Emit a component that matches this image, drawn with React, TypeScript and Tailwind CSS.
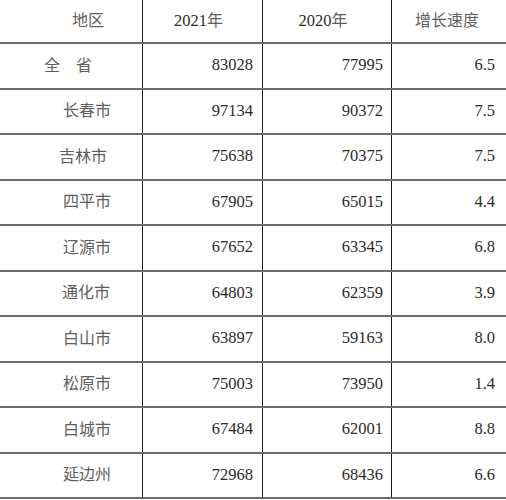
const rows = [
  { name: "全\u3000省", pad: "pr-[50px]", y21: "83028", y20: "77995", rate: "6.5" },
  { name: "长春市", pad: "pr-[31px]", y21: "97134", y20: "90372", rate: "7.5" },
  { name: "吉林市", pad: "pr-[35px]", y21: "75638", y20: "70375", rate: "7.5" },
  { name: "四平市", pad: "pr-[31px]", y21: "67905", y20: "65015", rate: "4.4" },
  { name: "辽源市", pad: "pr-[31px]", y21: "67652", y20: "63345", rate: "6.8" },
  { name: "通化市", pad: "pr-[32px]", y21: "64803", y20: "62359", rate: "3.9" },
  { name: "白山市", pad: "pr-[31px]", y21: "63897", y20: "59163", rate: "8.0" },
  { name: "松原市", pad: "pr-[31px]", y21: "75003", y20: "73950", rate: "1.4" },
  { name: "白城市", pad: "pr-[31px]", y21: "67484", y20: "62001", rate: "8.8" },
  { name: "延边州", pad: "pr-[31px]", y21: "72968", y20: "68436", rate: "6.6" },
];

export default function App() {
  return (
    <div className="w-[506px] h-[500px] bg-white text-[#2b2b2b] text-[16.5px] font-['Liberation_Serif','Noto_Sans_CJK_SC',serif]">
      {/* header */}
      <div className="grid grid-cols-[143px_120px_129px_1fr] h-[44px] border-b-2 border-[#6b6b6b]">
        <div className="flex items-center pl-[72px] border-r border-[#1a1a1a] text-[#5e5e5e] text-[16px]">地区</div>
        <div className="flex items-center justify-center pr-[8px] border-r border-[#1a1a1a]">
          2021<span className="text-[#5e5e5e] text-[16px]">年</span>
        </div>
        <div className="flex items-center justify-center pr-[8px] border-r border-[#1a1a1a]">
          2020<span className="text-[#5e5e5e] text-[16px]">年</span>
        </div>
        <div className="flex items-center pl-[23px] text-[#5e5e5e] text-[16px]">增长速度</div>
      </div>

      {/* rows */}
      {rows.map((r) => (
        <div
          key={r.name}
          className="grid grid-cols-[143px_120px_129px_1fr] h-[45.5px] border-b-2 border-[#6b6b6b]"
        >
          <div className={`flex items-center justify-end border-r border-[#1a1a1a] text-[#5e5e5e] text-[16px] ${r.pad}`}>
            {r.name}
          </div>
          <div className="flex items-center justify-end pr-[9px] border-r border-[#1a1a1a]">{r.y21}</div>
          <div className="flex items-center justify-end pr-[8px] border-r border-[#1a1a1a]">{r.y20}</div>
          <div className="flex items-center justify-end pr-[11px]">{r.rate}</div>
        </div>
      ))}
    </div>
  );
}
